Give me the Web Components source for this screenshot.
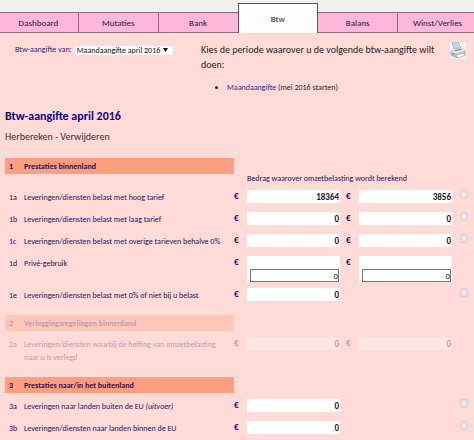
<!DOCTYPE html>
<html lang="nl">
<head>
<meta charset="utf-8">
<meta name="viewport" content="width=device-width, initial-scale=1">
<title>Btw-aangifte april 2016</title>
<style>
	html {
		--page: #fedbd6;
		--navy: #28105c;
		--link: #31208a;
		--band: #ff9f80;
		--tab: #ffb8dc;
		--line: #8d6c7d;
		background: var(--page);
	}

	body {
		margin: 0;
		overflow: hidden;
		font-family: Carlito, Calibri, Lato, "Liberation Sans", sans-serif;
		font-size: 8px;
		line-height: 12px;
		color: #222;
	}
</style>
</head>
<body>
<btw-page>
	<tab-bar slot="tabs">
		<tab-item>Dashboard</tab-item>
		<tab-item>Mutaties</tab-item>
		<tab-item>Bank</tab-item>
		<tab-item active>Btw</tab-item>
		<tab-item>Balans</tab-item>
		<tab-item>Winst/Verlies</tab-item>
	</tab-bar>
	<period-picker slot="picker" label="Btw-aangifte van:" value="Maandaangifte april 2016"></period-picker>
	<period-choice slot="choice">
		<span slot="intro">Kies de periode waarover u de volgende btw-aangifte wilt doen:</span>
	</period-choice>
	<print-button slot="choice"></print-button>
	<return-heading>Btw-aangifte april 2016</return-heading>
	<return-table></return-table>
</btw-page>

<script>
class BtwPage extends HTMLElement {
	constructor() {
		super();
		this.attachShadow( { mode: 'open' } );
	}

	connectedCallback() {
		this.shadowRoot.innerHTML = `
		<style>
			:host { display: block; }

			.top {
				display: grid;
				grid-template-columns: 201fr 273fr;
				min-height: 57px;
				padding-top: 9px;
			}

			.choice {
				display: flex;
				align-items: flex-start;
				justify-content: space-between;
				padding-right: 8px;
			}
		</style>
		<slot name="tabs"></slot>
		<div class="top">
			<slot name="picker"></slot>
			<div class="choice"><slot name="choice"></slot></div>
		</div>
		<main><slot></slot></main>
	`;
	}
}

class TabBar extends HTMLElement {
	constructor() {
		super();
		this.attachShadow( { mode: 'open' } );
	}

	connectedCallback() {
		this.shadowRoot.innerHTML = `
		<style>
			:host {
				display: block;
				overflow: hidden;
				background: #efefed;
			}

			nav {
				display: grid;
				grid-template-columns: repeat(6, 1fr);
				align-items: end;
				margin: 0 -3px 0 -2px;
				padding-top: 3px;
			}
		</style>
		<nav><slot></slot></nav>
	`;
	}
}

class TabItem extends HTMLElement {
	constructor() {
		super();
		this.attachShadow( { mode: 'open' } );
	}

	connectedCallback() {
		this.shadowRoot.innerHTML = `
		<style>
			:host { display: block; }

			a {
				display: block;
				box-sizing: border-box;
				height: 21px;
				border: solid var(--line);
				border-width: 1px 0 1px 1px;
				background: var(--tab);
				color: #2d1030;
				font-size: 9px;
				line-height: 20px;
				text-align: center;
				text-decoration: none;
			}

			:host([active]) a {
				height: 30px;
				margin-right: -1px;
				position: relative;
				border: 1px solid #555;
				border-bottom: 0;
				border-radius: 1px 1px 0 0;
				background: #fdfdfd;
				line-height: 30px;
			}
		</style>
		<a href="#"><slot></slot></a>
	`;
	}
}

class PeriodPicker extends HTMLElement {
	constructor() {
		super();
		this.attachShadow( { mode: 'open' } );
	}

	connectedCallback() {
		this.shadowRoot.innerHTML = `
		<style>
			:host {
				display: flex;
				align-items: flex-start;
				gap: 3px;
				padding-left: 15px;
			}

			label {
				color: var(--link);
				line-height: 15px;
			}

			.box {
				position: relative;
				margin-top: 4px;
			}

			select {
				display: block;
				appearance: none;
				width: 98px;
				height: 9px;
				padding: 0 0 0 2px;
				border: 0;
				border-radius: 0;
				background: #fff;
				color: #111;
				font: inherit;
				line-height: 9px;
			}

			svg {
				position: absolute;
				top: 2px;
				right: 5px;
				width: 5px;
				height: 4px;
				pointer-events: none;
			}
		</style>
		<label for="period">${this.getAttribute('label')}</label>
		<div class="box">
			<select id="period"><option>${this.getAttribute('value')}</option></select>
			<svg viewBox="0 0 5 4"><path d="M0 0h5L2.500 4z" fill="#111"/></svg>
		</div>
	`;
	}
}

class PeriodChoice extends HTMLElement {
	constructor() {
		super();
		this.attachShadow( { mode: 'open' } );
	}

	connectedCallback() {
		this.shadowRoot.innerHTML = `
		<style>
			:host {
				display: block;
				max-width: 242px;
			}

			p {
				margin: 0;
				color: #2b2024;
				font-size: 10px;
				line-height: 15px;
			}

			ul {
				margin: 9px 0 0;
				padding-left: 26px;
			}

			a {
				color: var(--link);
				text-decoration: none;
			}
		</style>
		<p><slot name="intro"></slot></p>
		<ul><li><a href="#">Maandaangifte</a> (mei 2016 starten)</li></ul>
	`;
	}
}

class PrintButton extends HTMLElement {
	constructor() {
		super();
		this.attachShadow( { mode: 'open' } );
	}

	connectedCallback() {
		this.shadowRoot.innerHTML = `
		<style>
			:host { display: block; }

			button {
				display: block;
				width: 16px;
				height: 17px;
				padding: 0;
				border: 0;
				background: #fcf3f2;
			}

			svg { display: block; }
		</style>
		<button type="button" aria-label="Afdrukken">
			<svg width="16" height="17" viewBox="0 0 16 17">
				<path d="M2 .8 8.500.300 11 7 4.500 8z" fill="#dcecfb" stroke="#7d9dc9" stroke-width=".7"/>
				<path d="M3.500 2.500 7.800 2M4.200 4.300 8.500 3.800M4.900 6 9.200 5.500" stroke="#8fb4e4" stroke-width=".8"/>
				<path d="M1 9.200 4 7.200 12 6 15 8.500 15 12.500 6 15.500 1 13z" fill="#c3c9cc" stroke="#8b9499" stroke-width=".7"/>
				<path d="M1 9.200 4 7.200 12 6 15 8.500 6 11z" fill="#eceeef"/>
				<path d="M4.500 8.600 11.500 7.400" stroke="#626c74" stroke-width="1"/>
				<path d="M6 13 14 10.800 15 13.500 7.500 16z" fill="#f5f7f8" stroke="#8b9499" stroke-width=".6"/>
				<path d="M2 11.500 5 12.800" stroke="#747d82" stroke-width=".8"/>
			</svg>
		</button>
	`;
	}
}

class ReturnHeading extends HTMLElement {
	constructor() {
		super();
		this.attachShadow( { mode: 'open' } );
	}

	connectedCallback() {
		this.shadowRoot.innerHTML = `
		<style>
			:host {
				display: block;
				padding: 0 5px;
			}

			h1 {
				margin: 0;
				padding-top: 8px;
				color: #0a0080;
				font-size: 12px;
				line-height: 18px;
			}

			p {
				margin: 0;
				padding: 4px 0 8px;
				color: #3b2a2e;
				font-size: 10px;
				line-height: 16px;
			}

			a {
				color: inherit;
				text-decoration: none;
			}
		</style>
		<h1><slot></slot></h1>
		<p><a href="#">Herbereken</a> - <a href="#">Verwijderen</a></p>
	`;
	}
}

class MoneyInput extends HTMLElement {
	constructor() {
		super();
		this.attachShadow( { mode: 'open' } );
	}

	connectedCallback() {
		const value = this.getAttribute('value');
		const label = this.getAttribute('label');
		const sub = this.getAttribute('sub');
		const second = sub === null ? '' : `
			<div class="sub"><input aria-label="${label} correctie" value="${sub}"></div>`;

		this.shadowRoot.innerHTML = `
		<style>
			:host {
				display: block;
				background: #fff;
			}

			input {
				display: block;
				box-sizing: border-box;
				width: 100%;
				height: 13px;
				padding: 0 1px;
				border: 0;
				border-radius: 0;
				background: transparent;
				color: #1a1420;
				font: inherit;
				font-size: 9px;
				font-weight: bold;
				line-height: 13px;
				text-align: right;
			}

			.sub { padding: 0 1px 0 3px; }

			.sub input {
				border: 1px solid #777;
				padding: 0;
				font-weight: normal;
				line-height: 11px;
			}
		</style>
		<input aria-label="${label}" value="${value}">
		${second}
	`;
	}
}

class NoteButton extends HTMLElement {
	constructor() {
		super();
		this.attachShadow( { mode: 'open' } );
	}

	connectedCallback() {
		this.shadowRoot.innerHTML = `
		<style>
			:host { display: block; }

			button {
				display: block;
				padding: 0;
				border: 0;
				background: none;
			}

			svg { display: block; }
		</style>
		<button type="button" aria-label="Notitie">
			<svg width="8" height="9" viewBox="0 0 8 9">
				<rect x=".5" y=".5" width="7" height="8" rx="2" fill="#e9dde3" stroke="#d8ced8"/>
				<path d="M2.500 3h3M2.500 4.500h3M2.500 6h3" stroke="#f8f1f3" stroke-width=".9"/>
			</svg>
		</button>
	`;
	}
}

const ROWS = [
	{ code: '1', band: 'Prestaties binnenland' },
	{ caption: 'Bedrag waarover omzetbelasting wordt berekend' },
	{ code: '1a', text: 'Leveringen/diensten belast met hoog tarief', amounts: ['18364', '3856'], note: true },
	{ code: '1b', text: 'Leveringen/diensten belast met laag tarief', amounts: ['0', '0'], note: true },
	{ code: '1c', text: 'Leveringen/diensten belast met overige tarieven behalve 0%', amounts: ['0', '0'], note: true },
	{ code: '1d', text: 'Privé-gebruik', amounts: ['', ''], sub: '0' },
	{ code: '1e', text: 'Leveringen/diensten belast met 0% of niet bij u belast', amounts: ['0'], note: true },
	{ code: '2', band: 'Verleggingsregelingen binnenland', faded: true },
	{ code: '2a', text: 'Leveringen/diensten waarbij de heffing van omzetbelasting naar u is verlegd', amounts: ['0', '0'], faded: true },
	{ code: '3', band: 'Prestaties naar/in het buitenland' },
	{ code: '3a', text: 'Leveringen naar landen buiten de EU <i>(uitvoer)</i>', amounts: ['0'], note: true },
	{ code: '3b', text: 'Leveringen/diensten naar landen binnen de EU', amounts: ['0'], note: true }
];

class ReturnTable extends HTMLElement {
	constructor() {
		super();
		this.attachShadow( { mode: 'open' } );
	}

	row(item) {
		if (item.caption) {
			return `<tr class="caption"><td colspan="3"></td><td colspan="4">${item.caption}</td></tr>`;
		}

		const faded = item.faded ? 'faded' : '';
		if (item.band) {
			return `<tr class="band ${faded}"><th>${item.code}</th><th>${item.band}</th><td colspan="5"></td></tr>`;
		}

		const sub = item.sub ? `sub="${item.sub}"` : '';
		const cells = [0, 1].map(i => {
			const amount = item.amounts[i];
			if (amount === undefined) return '<td></td><td></td>';
			return `
				<td class="euro">€</td>
				<td><money-input label="${item.code} bedrag ${i + 1}" value="${amount}" ${sub}></money-input></td>`;
		}).join('');

		return `
			<tr class="${faded}">
				<td class="code">${item.code}</td>
				<td class="text">${item.text}</td>
				${cells}
				<td class="note">${item.note ? '<note-button></note-button>' : ''}</td>
			</tr>`;
	}

	connectedCallback() {
		this.shadowRoot.innerHTML = `
		<style>
			:host {
				display: block;
				padding-left: 5px;
			}

			table {
				width: 100%;
				table-layout: fixed;
				border-spacing: 0;
				color: var(--navy);
			}

			.c-code { width: 19px; }
			.c-euro { width: 13px; }
			.c-sum { width: 93px; }
			.c-gap { width: 19px; }
			.c-note { width: 22px; }

			tr { height: 22px; }

			td, th {
				padding: 0 0 6px;
				text-align: left;
				vertical-align: top;
			}

			td.code, td.text {
				padding-top: 1px;
				padding-bottom: 8px;
				line-height: 13px;
			}

			td.text { padding-right: 8px; }

			.code, th:first-child { padding-left: 4px; }

			/* the clear borders keep the bands apart from the rows */
			.band th {
				padding-top: 2px;
				padding-bottom: 2px;
				border: solid transparent;
				border-width: 5px 0 6px;
				background: var(--band);
				background-clip: padding-box;
			}

			.band:has(+ .caption) { height: 21px; }
			.band:has(+ .caption) th { border-bottom: 0; }

			.caption { height: 16px; }

			.caption td {
				padding-bottom: 8px;
				line-height: 8px;
			}

			.euro {
				font-size: 9px;
				font-weight: bold;
			}

			.euro ~ .euro { padding-left: 6px; }

			.note { padding-left: 8px; }

			.faded { opacity: .32; }
		</style>
		<table>
			<colgroup>
				<col class="c-code"><col>
				<col class="c-euro"><col class="c-sum">
				<col class="c-gap"><col class="c-sum">
				<col class="c-note">
			</colgroup>
			<tbody>${ROWS.map(item => this.row(item)).join('')}</tbody>
		</table>
	`;
	}
}

customElements.define('tab-bar', TabBar);
customElements.define('tab-item', TabItem);
customElements.define('period-picker', PeriodPicker);
customElements.define('period-choice', PeriodChoice);
customElements.define('print-button', PrintButton);
customElements.define('return-heading', ReturnHeading);
customElements.define('money-input', MoneyInput);
customElements.define('note-button', NoteButton);
customElements.define('return-table', ReturnTable);
customElements.define('btw-page', BtwPage);
</script>
</body>
</html>
